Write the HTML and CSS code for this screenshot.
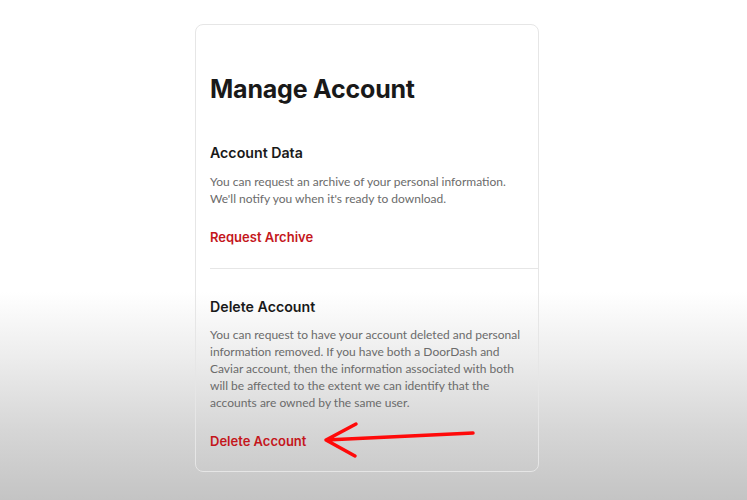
FILE: index.html
```html
<!DOCTYPE html>
<html lang="en">
<head>
<meta charset="utf-8">
<title>Manage Account</title>
<link rel="stylesheet" href="styles.css">
</head>
<body>
<main class="card">
  <h1 class="title">Manage Account</h1>
  <section class="section">
    <h2 class="section-title">Account Data</h2>
    <p class="section-text">You can request an archive of your personal information. We'll notify you when it's ready to download.</p>
    <a class="section-link" href="#">Request Archive</a>
  </section>
  <hr class="divider">
  <section class="section">
    <h2 class="section-title section-title-2">Delete Account</h2>
    <p class="section-text section-text-2">You can request to have your account deleted and personal information removed. If you have both a DoorDash and Caviar account, then the information associated with both will be affected to the extent we can identify that the accounts are owned by the same user.</p>
    <a class="section-link" href="#">Delete Account</a>
  </section>
</main>
<svg class="annotation" width="747" height="500" viewBox="0 0 747 500" aria-hidden="true">
  <path d="M473 433 L326 440 M356 424 L326 440 L355 456" fill="none" stroke="#ff0a0a" stroke-width="3.5" stroke-linecap="round" stroke-linejoin="round"/>
</svg>
</body>
</html>
```
FILE: styles.css
```css
html, body {
  margin: 0;
  padding: 0;
}
body {
  width: 747px;
  height: 500px;
  overflow: hidden;
  position: relative;
  background: linear-gradient(to bottom, #ffffff 0px, #ffffff 292px, #ececec 360px, #d6d6d6 430px, #c4c4c4 500px);
  font-family: Inter, "Noto Sans", sans-serif;
  color: #191919;
}
.card {
  box-sizing: border-box;
  width: 344px;
  height: 448px;
  margin: 24px 0 0 195px;
  padding: 48px 0 0 14px;
  border: 1px solid #e6e6e6;
  border-radius: 8px;
  display: flex;
  flex-direction: column;
}
.title {
  margin: 0;
  font-size: 25px;
  line-height: 32px;
  font-weight: 700;
  letter-spacing: -0.2px;
  color: #191919;
}
.section {
  display: flex;
  flex-direction: column;
  align-items: flex-start;
}
.section-title {
  margin: 38px 0 0;
  font-size: 14.2px;
  line-height: 20px;
  font-weight: 600;
  color: #191919;
}
.section-title-2 {
  margin-top: 28px;
}
.section-text {
  margin: 10px 0 0;
  padding-right: 4px;
  font-family: Lato, "Noto Sans", sans-serif;
  font-size: 12px;
  line-height: 17px;
  color: #6b6b6b;
}
.section-text-2 {
  margin-top: 9px;
}
.section-link {
  margin-top: 21px;
  font-size: 13px;
  line-height: 18px;
  font-weight: 600;
  color: #c4161c;
  text-decoration: none;
}
.divider {
  margin: 22px 0 0;
  border: 0;
  border-top: 1px solid #e6e6e6;
  height: 0;
}
.annotation {
  position: absolute;
  left: 0;
  top: 0;
}
```
